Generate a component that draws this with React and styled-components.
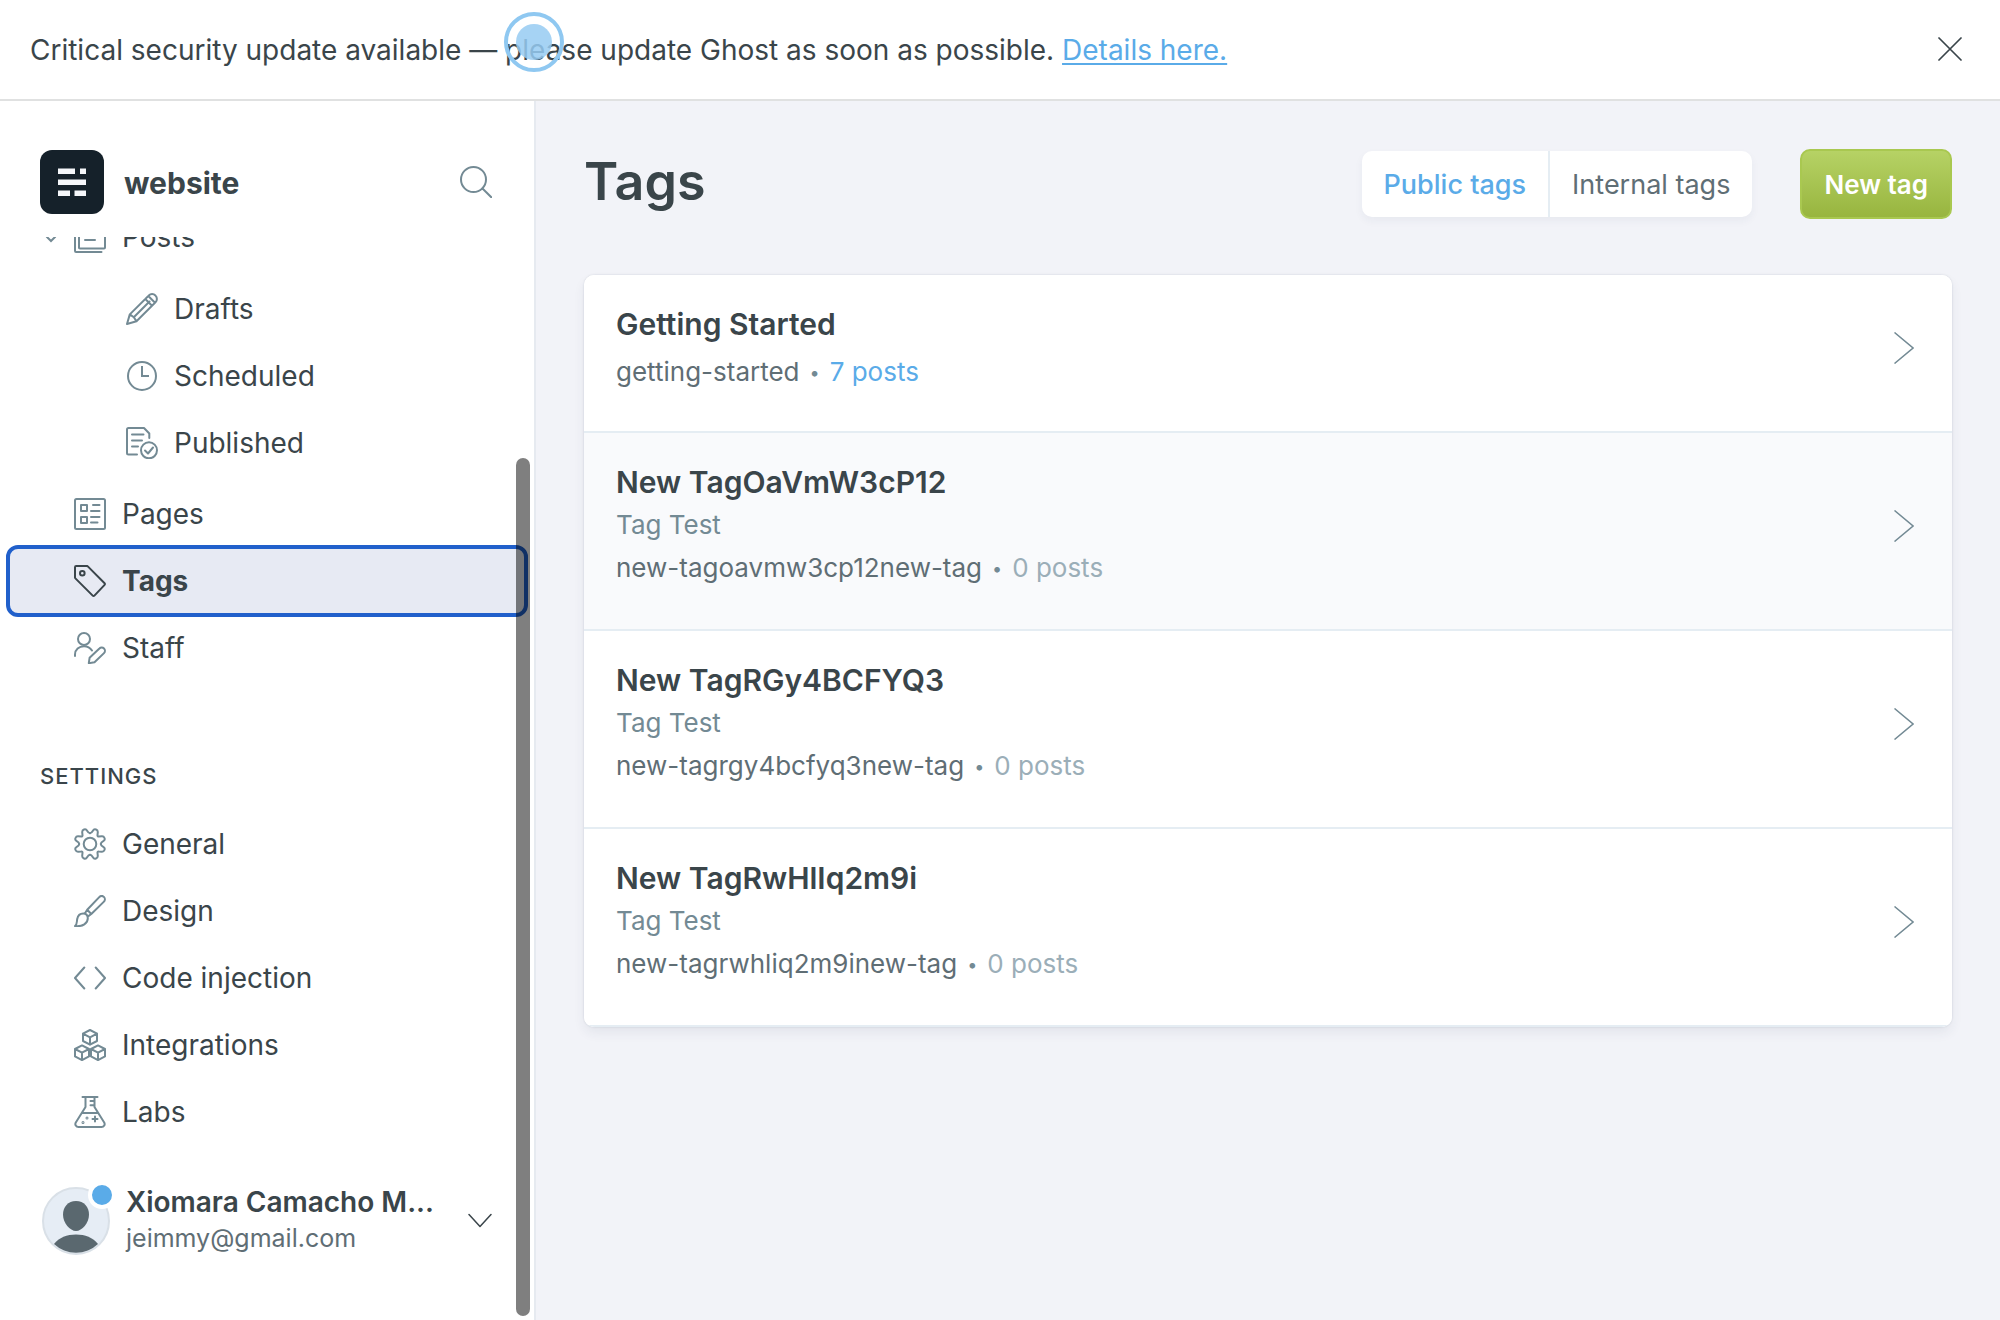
import React from "react";
import styled, { createGlobalStyle, css } from "styled-components";

const ink = "#3a454a";
const slate = "#5f6e75";
const mist = "#738a94";
const blue = "#5aabe8";
const line = "#e5edf3";

const GlobalStyle = createGlobalStyle`
  *, *::before, *::after { box-sizing: border-box; }
  body {
    margin: 0;
    color: ${ink};
    background: #f2f3f8;
    font-family: Inter, "Liberation Sans", sans-serif;
    font-size: 28px;
    -webkit-font-smoothing: antialiased;
  }
  h1, h2, h3, p, ul, ol { margin: 0; padding: 0; }
  ul, ol { list-style: none; }
  a { color: inherit; text-decoration: none; }
  button { font: inherit; color: inherit; border: 0; padding: 0; background: none; cursor: pointer; }
`;

const Page = styled.div`
  position: relative;
  display: flex;
  flex-direction: column;
  height: 100vh;
  overflow: hidden;
`;

const Banner = styled.div`
  flex: none;
  display: flex;
  align-items: center;
  justify-content: space-between;
  padding: 24px 38px 25px 30px;
  background: #fff;
  border-bottom: 2px solid #e0e1e1;
  line-height: 50px;
`;

const BannerText = styled.p`
  padding-top: 2px;
  line-height: 48px;
`;

const BannerLink = styled.a`
  color: ${blue};
  text-decoration: underline;
  text-decoration-thickness: 2px;
  text-underline-offset: 3px;
`;

const IconButton = styled.button`
  display: flex;
`;

const TouchPoint = styled.span`
  position: absolute;
  top: 12px;
  left: 504px;
  display: grid;
  place-items: center;
  width: 60px;
  height: 60px;
  border: 4px solid #8fc8f1;
  border-radius: 50%;
  pointer-events: none;

  &::after {
    content: "";
    width: 36px;
    height: 36px;
    border-radius: 50%;
    background: rgba(150, 203, 242, 0.85);
  }
`;

const Body = styled.div`
  flex: 1;
  min-height: 0;
  display: flex;
`;

const Sidebar = styled.aside`
  position: relative;
  flex: none;
  display: flex;
  flex-direction: column;
  width: 536px;
  background: #fff;
  border-right: 2px solid #e6eaf0;
`;

const SiteHeader = styled.header`
  display: flex;
  align-items: center;
  gap: 20px;
  padding: 49px 42px 23px 40px;
`;

const SiteName = styled.h2`
  flex: 1;
  padding-top: 2px;
  font-size: 30px;
  font-weight: 700;
  line-height: 40px;
`;

const NavScroll = styled.nav`
  flex: 1;
  min-height: 0;
  overflow: hidden;
`;

const NavList = styled.ul`
  display: flex;
  flex-direction: column;
  gap: 3px;
  ${(p) => p.$scrolled && css`margin-top: -32px;`}
`;

const SubList = styled(NavList)`
  padding: 8px 0 4px;
`;

const NavLink = styled.a`
  display: flex;
  align-items: center;
  gap: 16px;
  height: 64px;
  margin-left: 10px;
  margin-right: 10px;
  padding-left: ${(p) => (p.$depth === 2 ? 116 : 64)}px;
  border-radius: 8px;
  color: ${ink};
  ${(p) =>
    p.$current &&
    css`
      font-weight: 700;
      background: #e7eaf3;
      outline: 4px solid #2160cb;
    `}
  svg { color: ${(p) => (p.$current ? ink : mist)}; }
`;

const PostsRow = styled.div`
  display: flex;
  align-items: center;
  padding-left: 45px;
  ${NavLink} { flex: 1; margin-left: 0; padding-left: 17px; }
`;

const SectionTitle = styled.h3`
  margin: 80px 40px 20px;
  font-size: 22px;
  font-weight: 500;
  line-height: 32px;
  letter-spacing: 1px;
  text-transform: uppercase;
`;

const UserMenu = styled.button`
  display: flex;
  align-items: center;
  gap: 16px;
  padding: 0 42px 62px;
  text-align: left;
`;

const AvatarBox = styled.span`
  position: relative;
  flex: none;
  width: 68px;
  height: 68px;
  svg { display: block; }
`;

const Dot = styled.span`
  position: absolute;
  top: -6px;
  right: -6px;
  width: 28px;
  height: 28px;
  border: 4px solid #fff;
  border-radius: 50%;
  background: ${blue};
`;

const UserText = styled.span`
  flex: 1;
  min-width: 0;
  display: flex;
  flex-direction: column;
  padding-bottom: 2px;
  line-height: 36px;
`;

const UserName = styled.span`
  font-size: 28px;
  font-weight: 600;
`;

const UserMail = styled.span`
  font-size: 25px;
  color: ${slate};
`;

const ScrollThumb = styled.span`
  position: absolute;
  top: 357px;
  right: 4px;
  bottom: 4px;
  width: 14px;
  border-radius: 7px;
  background: rgba(0, 0, 0, 0.5);
`;

const Main = styled.main`
  flex: 1;
  min-width: 0;
  padding: 48px 48px 0;
`;

const MainHeader = styled.header`
  display: flex;
  align-items: center;
  padding-bottom: 56px;
`;

const Title = styled.h1`
  flex: 1;
  padding-bottom: 4px;
  font-size: 52px;
  font-weight: 600;
  line-height: 64px;
`;

const Segmented = styled.div`
  display: flex;
  margin-right: 48px;
  border-radius: 10px;
  background: #fff;
  box-shadow: 0 4px 8px rgba(40, 60, 90, 0.05);
`;

const Segment = styled.button`
  height: 66px;
  padding: 0 22px;
  font-size: 27px;
  font-weight: ${(p) => (p.$active ? 500 : 400)};
  color: ${(p) => (p.$active ? blue : slate)};
  & + & { border-left: 2px solid ${line}; }
`;

const PrimaryButton = styled.button`
  height: 70px;
  padding: 0 22px;
  border: 2px solid #a9c850;
  border-radius: 10px;
  font-size: 26px;
  font-weight: 600;
  color: #fff;
  background: linear-gradient(#b6d265, #98b53f);
`;

const TagList = styled.ol`
  overflow: hidden;
  border-radius: 10px;
  background: #fff;
  box-shadow: 0 0 2px rgba(40, 60, 90, 0.18), 0 6px 12px rgba(40, 60, 90, 0.07);
`;

const TagRow = styled.li`
  display: flex;
  align-items: center;
  padding: 28px 38px 32px 32px;
  border-bottom: 2px solid ${line};
  background: ${(p) => (p.$hovered ? "#f9fafc" : "#fff")};
`;

const TagText = styled.div`
  flex: 1;
  min-width: 0;
  padding-bottom: 6px;
`;

const TagName = styled.h3`
  font-size: 30px;
  font-weight: 600;
  line-height: 42px;
`;

const TagDescription = styled.p`
  padding-top: 2px;
  font-size: 26px;
  line-height: 40px;
  color: ${mist};
`;

const TagMeta = styled.p`
  padding-top: 6px;
  font-size: 26px;
  line-height: 42px;
  color: ${slate};
  ${TagDescription} + & { padding: 2px 0; }
`;

const Bullet = styled.span`
  margin: 0 10px;
  font-size: 18px;
  line-height: 1;
  vertical-align: 2px;
  color: ${mist};
`;

const PostCount = styled.span`
  color: ${(p) => (p.$linked ? blue : "#9baeb8")};
`;

function Icon({ size = 32, stroke = 2, children }) {
  return (
    <svg
      width={size}
      height={size}
      viewBox={`0 0 ${size} ${size}`}
      fill="none"
      stroke="currentColor"
      strokeWidth={stroke}
      strokeLinecap="round"
      strokeLinejoin="round"
      aria-hidden="true"
    >
      {children}
    </svg>
  );
}

const cube = "M0 -7.3L7 -3.7V3.7L0 7.4L-7 3.7V-3.7ZM-7 -3.7L0 0L7 -3.7M0 0V7.4";
const gearQuarter =
  "M16 5.2c1.5 0 2-.9 2.9-2.5.7-1.3 1.8-1.7 3.1-1.2 1.3.5 1.9 1.3 1.8 2.7l-.3 3c-.1.8.5 1.4 1.3 1.3l3-.3c1.4-.1 2.2.5 2.7 1.8.5 1.3.1 2.4-1.2 3.1-1.6.9-2.5 1.4-2.5 2.9";

const icons = {
  posts: <path d="M5 27V2a1 1 0 0 1 1-1h24a1 1 0 0 1 1 1v24.500a1 1 0 0 1-1 1H6a1 1 0 0 1-1-1M1 5v25a1 1 0 0 0 1 1h25.500M11 19h10M11 13h14M11 7h14" />,
  drafts: (
    <path d="M1 31l2.800-9.600L22.800 2.500a4.600 4.600 0 0 1 6.600 0l.1.1a4.600 4.600 0 0 1 0 6.600L10.500 28.300zM3.800 21.400L7.800 24.200 10.500 28.300M7.800 24.200L23.500 8.500M19.300 6l6.700 6.700M22.300 3l6.700 6.700" />
  ),
  scheduled: (
    <>
      <circle cx="16" cy="16" r="14" />
      <path d="M16 6v10h7" strokeLinecap="butt" strokeLinejoin="miter" />
    </>
  ),
  published: (
    <>
      <path d="M11 27.500H2.500A1.500 1.500 0 0 1 1 26V2.500A1.500 1.500 0 0 1 2.500 1H18l5.300 5.500V11M6 7.500h11.500M6 13.500h10M6 19.500h6" />
      <circle cx="23" cy="23.300" r="8" />
      <path d="M19 23.500l3 3 5-6" />
    </>
  ),
  pages: (
    <>
      <rect x="1" y="1" width="30" height="30" rx="1.500" />
      <path d="M7 7h6v6H7zM7 19h6v6H7zM19 7h6.500M17 13h8.500M17 19h8.500M17 24.500h6.500" />
    </>
  ),
  tags: (
    <>
      <path d="M2.200 1H13l.8.4L30.600 18.200a1.200 1.200 0 0 1 0 1.700L20.400 30.600a1.200 1.200 0 0 1-1.700 0L1.400 13.400 1 12.600V2.200A1.200 1.200 0 0 1 2.200 1z" />
      <circle cx="8.300" cy="8.300" r="2.300" />
    </>
  ),
  staff: (
    <>
      <circle cx="10" cy="7" r="6" />
      <path d="M1 24v-1.500C1 17.500 5 14.200 10 14.200c3.500 0 6.200 1.500 8 4.300M14.800 31.200l.8-5.400 9.800-9.300a3.200 3.200 0 0 1 4.600 4.600l-9.500 9.200z" />
    </>
  ),
  general: (
    <>
      <circle cx="16" cy="16" r="6.300" />
      <path d={gearQuarter} />
      <path d={gearQuarter} transform="rotate(90 16 16)" />
      <path d={gearQuarter} transform="rotate(180 16 16)" />
      <path d={gearQuarter} transform="rotate(270 16 16)" />
    </>
  ),
  design: (
    <path d="M1 31.100c2.200-1.500 1.700-4 2.200-7.100.6-3.300 3-5.600 6-5.600 2.800 0 4.600 2 4.600 4.800 0 5-5 8.700-12.800 7.900zM10.800 18.500l2.400-3.700L25 2.400c1.500-1.600 3.500-1.800 4.900-.5 1.400 1.400 1.300 3.500-.2 5L17.300 19l-3.600 2.600M13.200 14.800l4.100 4.200" />
  ),
  code: <path d="M10.300 5.500L1 16l9.300 10.500M21.700 5.500L31 16l-9.300 10.500" />,
  integrations: (
    <>
      <path d={cube} transform="translate(16 8.300)" />
      <path d={cube} transform="translate(8 23.700)" />
      <path d={cube} transform="translate(24 23.700)" />
    </>
  ),
  labs: (
    <>
      <path d="M8.500 1h15M11.500 1v10L1.800 26.500C.6 28.700 2 31 4.500 31h23c2.500 0 3.900-2.300 2.700-4.500L20.500 11V1M7.800 17h16.400M16.500 5h4M16.500 9.300h4M18.500 23h5M21 20.500v5" />
      <circle cx="9" cy="26.500" r="0.500" />
      <circle cx="13" cy="22" r="0.500" />
    </>
  ),
};

function NavItem({ icon, label, depth = 1, current = false }) {
  return (
    <li>
      <NavLink href="#" $depth={depth} $current={current} aria-current={current ? "page" : undefined}>
        <Icon>{icons[icon]}</Icon>
        {label}
      </NavLink>
    </li>
  );
}

const settings = [
  ["general", "General"],
  ["design", "Design"],
  ["code", "Code injection"],
  ["integrations", "Integrations"],
  ["labs", "Labs"],
];

const tags = [
  { name: "Getting Started", slug: "getting-started", posts: 7 },
  { name: "New TagOaVmW3cP12", description: "Tag Test", slug: "new-tagoavmw3cp12new-tag", posts: 0, hovered: true },
  { name: "New TagRGy4BCFYQ3", description: "Tag Test", slug: "new-tagrgy4bcfyq3new-tag", posts: 0 },
  { name: "New TagRwHlIq2m9i", description: "Tag Test", slug: "new-tagrwhliq2m9inew-tag", posts: 0 },
];

function Avatar() {
  return (
    <AvatarBox>
      <svg width="68" height="68" viewBox="0 0 68 68" aria-hidden="true">
        <circle cx="34" cy="34" r="33" fill="#e6edf5" stroke="#d9e0e7" strokeWidth="2" />
        <path d="M34 14c8 0 13 6 13 13.500C47 36 40 44 34 44s-13-8-13-16.500C21 20 26 14 34 14z" fill="#5a686f" />
        <path d="M12 57c5-6.500 13-9.500 22-9.500S51 50.500 56 57a32 32 0 0 1-44 0z" fill="#5a686f" />
      </svg>
      <Dot />
    </AvatarBox>
  );
}

export default function App() {
  return (
    <>
      <GlobalStyle />
      <Page>
        <Banner role="status">
          <BannerText>
            Critical security update available — please update Ghost as soon as possible.{" "}
            <BannerLink href="#">Details here.</BannerLink>
          </BannerText>
          <IconButton aria-label="Close">
            <Icon size={24} stroke={1.75}>
              <path d="M1 1l22 22M23 1L1 23" />
            </Icon>
          </IconButton>
        </Banner>

        <Body>
          <Sidebar>
            <SiteHeader>
              <svg width="64" height="64" viewBox="0 0 64 64" aria-hidden="true">
                <rect width="64" height="64" rx="12" fill="#15212a" />
                <path
                  d="M18 18.500h17V24H18zM40 18.500h6V24h-6zM18 29.500h28V35H18zM18 40.500h12V46H18zM34.500 40.500H46V46H34.500z"
                  fill="#f5f7fa"
                />
              </svg>
              <SiteName>website</SiteName>
              <IconButton aria-label="Search">
                <Icon>
                  <g stroke={mist}>
                    <circle cx="13.500" cy="13.500" r="12.500" />
                    <path d="M22.500 22.500L31.500 31.500" />
                  </g>
                </Icon>
              </IconButton>
            </SiteHeader>

            <NavScroll>
              <NavList $scrolled>
                <li>
                  <PostsRow>
                    <svg width="12" height="12" viewBox="0 0 12 12" fill="none" stroke={mist} strokeWidth="2" aria-hidden="true">
                      <path d="M1.500 5.500L6 10l4.500-4.500" />
                    </svg>
                    <NavLink href="#">
                      <Icon>{icons.posts}</Icon>
                      Posts
                    </NavLink>
                  </PostsRow>
                  <SubList>
                    <NavItem icon="drafts" label="Drafts" depth={2} />
                    <NavItem icon="scheduled" label="Scheduled" depth={2} />
                    <NavItem icon="published" label="Published" depth={2} />
                  </SubList>
                </li>
                <NavItem icon="pages" label="Pages" />
                <NavItem icon="tags" label="Tags" current />
                <NavItem icon="staff" label="Staff" />
              </NavList>
              <SectionTitle>Settings</SectionTitle>
              <NavList>
                {settings.map(([icon, label]) => (
                  <NavItem key={icon} icon={icon} label={label} />
                ))}
              </NavList>
            </NavScroll>

            <UserMenu>
              <Avatar />
              <UserText>
                <UserName>Xiomara Camacho M...</UserName>
                <UserMail>jeimmy@gmail.com</UserMail>
              </UserText>
              <Icon size={24} stroke={1.5}>
                <path d="M1 5.500l11 12 11-12" />
              </Icon>
            </UserMenu>
            <ScrollThumb />
          </Sidebar>

          <Main>
            <MainHeader>
              <Title>Tags</Title>
              <Segmented>
                <Segment $active aria-pressed="true">Public tags</Segment>
                <Segment aria-pressed="false">Internal tags</Segment>
              </Segmented>
              <PrimaryButton>New tag</PrimaryButton>
            </MainHeader>

            <TagList>
              {tags.map((tag) => (
                <TagRow key={tag.slug} $hovered={tag.hovered}>
                  <TagText>
                    <TagName>{tag.name}</TagName>
                    {tag.description && <TagDescription>{tag.description}</TagDescription>}
                    <TagMeta>
                      {tag.slug}
                      <Bullet>•</Bullet>
                      <PostCount as={tag.posts ? "a" : "span"} href={tag.posts ? "#" : undefined} $linked={tag.posts > 0}>
                        {tag.posts} posts
                      </PostCount>
                    </TagMeta>
                  </TagText>
                  <a href="#" aria-label={`Edit ${tag.name}`}>
                    <svg width="20" height="32" viewBox="0 0 20 32" fill="none" stroke={mist} strokeWidth="1.500" aria-hidden="true">
                      <path d="M0.500 0.500L19 16L0.500 31.500" />
                    </svg>
                  </a>
                </TagRow>
              ))}
            </TagList>
          </Main>
        </Body>
        <TouchPoint />
      </Page>
    </>
  );
}
